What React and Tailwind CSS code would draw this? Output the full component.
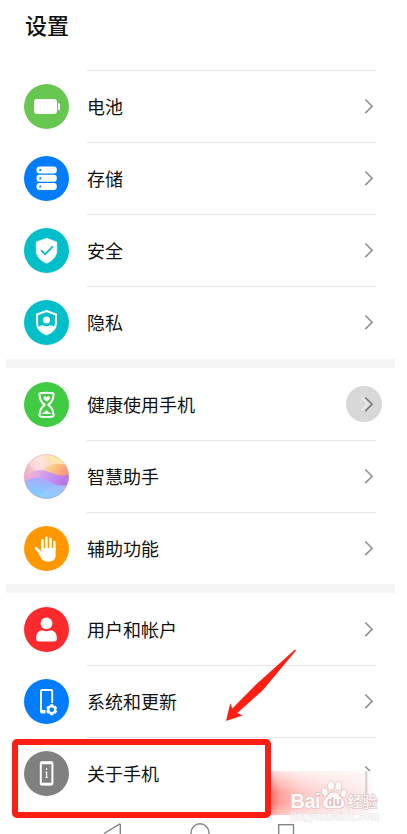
import { useId } from 'react'

const font = '"Noto Sans CJK SC", "Noto Sans", sans-serif'

function BatteryIcon() {
  return (
    <g fill="#fff">
      <rect x="10" y="15" width="23" height="15" rx="3" />
      <rect x="34" y="19.3" width="2" height="7" rx="0.7" />
    </g>
  )
}

function StorageIcon() {
  return (
    <g>
      {[10.6, 18.8, 27].map(y => (
        <g key={y}>
          <rect x="12.5" y={y} width="20.3" height="7" rx="3" fill="#fff" />
          <circle cx="16.3" cy={y + 3.5} r="1.1" fill="#007dff" />
        </g>
      ))}
    </g>
  )
}

function SecurityIcon() {
  return (
    <g>
      <path d="M22.5 10.2 L32.8 14 V22.5 C32.8 28.5 28.5 32.8 22.5 35.2 C16.5 32.8 12.2 28.5 12.2 22.5 V14 Z" fill="#fff" stroke="#fff" strokeWidth="0.6" strokeLinejoin="round" />
      <path d="M17 22.2 L21.2 26.2 L28.8 18.3" fill="none" stroke="#00bfc9" strokeWidth="1.7" />
    </g>
  )
}

function PrivacyIcon() {
  return (
    <g>
      <path d="M22.5 11 L32 14.6 V22.5 C32 28.4 28 32.2 22.5 34.3 C17 32.2 13 28.4 13 22.5 V14.6 Z" fill="none" stroke="#fff" strokeWidth="2.1" strokeLinejoin="round" />
      <circle cx="22.5" cy="20" r="3.5" fill="#fff" />
      <path d="M14 28.3 C15 26 16.5 25.3 18.8 25.2 Q22.5 27.4 26.2 25.2 C28.5 25.3 30 26 31 28.3 C28.5 31.5 25 33 22.5 34 C20 33 16.5 31.5 14 28.3 Z" fill="#fff" />
    </g>
  )
}

function HourglassIcon() {
  return (
    <g>
      <path d="M16.3 11.3 Q22.5 10.2 28.7 11.3 Q30.2 11.8 29.5 13.3 Q29 19.5 24.3 22.9 Q29 26.5 29.5 32.5 Q30.2 34 28.7 34.5 Q22.5 35.6 16.3 34.5 Q14.8 34 15.5 32.5 Q16 26.5 20.7 22.9 Q16 19.5 15.5 13.3 Q14.8 11.8 16.3 11.3 Z" fill="none" stroke="#fff" strokeWidth="2" strokeLinejoin="round" />
      <path d="M22.7 19.6 C21.2 18.5 19.6 17.2 19.6 15.9 C19.6 14.1 21.8 13.8 22.7 15.4 C23.6 13.8 26 14.1 26 15.9 C26 17.2 24.2 18.5 22.7 19.6 Z" fill="#fff" />
      <path d="M17.2 32 Q20.5 30.7 22.5 28 Q24.5 30.7 27.8 32 Z" fill="#fff" />
    </g>
  )
}

function AssistantIcon() {
  const id = useId()
  return (
    <g>
      <defs>
        <clipPath id={id + 'c'}><circle cx="22.5" cy="22.5" r="22.3" /></clipPath>
        <linearGradient id={id + 't'} x1="0" y1="0.55" x2="0.85" y2="0.05">
          <stop offset="0" stopColor="#f3a9c4" />
          <stop offset="0.5" stopColor="#fbd8cf" />
          <stop offset="1" stopColor="#fff09c" />
        </linearGradient>
        <linearGradient id={id + 'o'} x1="0" y1="0" x2="1" y2="0.5">
          <stop offset="0" stopColor="#fbd3b4" stopOpacity="0.4" />
          <stop offset="0.5" stopColor="#fdc37c" />
          <stop offset="1" stopColor="#f48f84" />
        </linearGradient>
        <linearGradient id={id + 'p'} x1="0" y1="0" x2="1" y2="0.2">
          <stop offset="0" stopColor="#f0aecd" stopOpacity="0.5" />
          <stop offset="0.35" stopColor="#dda9e6" />
          <stop offset="0.65" stopColor="#c691f4" />
          <stop offset="1" stopColor="#b878e4" />
        </linearGradient>
        <linearGradient id={id + 'b'} x1="0.3" y1="1" x2="0.6" y2="0">
          <stop offset="0" stopColor="#74d4ff" />
          <stop offset="0.5" stopColor="#8fc0ff" />
          <stop offset="1" stopColor="#b5a4f8" />
        </linearGradient>
      </defs>
      <g clipPath={`url(#${id}c)`}>
        <rect width="45" height="45" fill={`url(#${id}t)`} />
        <path d="M5 9 Q8 17 14 17 Q21 16 22 8 L20 0 H4 Z" fill="#fff" opacity="0.28" />
        <path d="M19 17 C25 9 36 8 45 12 V27 H16 Z" fill={`url(#${id}o)`} />
        <path d="M0 24 C8 16 16 14.5 24 17.5 S37 23.5 45 20.5 V33 H0 Z" fill={`url(#${id}p)`} />
        <path d="M0 27.5 C9 22.5 17 22.5 24 27 S37 32.5 45 31 V45 H0 Z" fill={`url(#${id}b)`} />
        <path d="M13 45 C17 37 25 33 36 31.5 L45 31 V45 Z" fill="#a9c9fa" opacity="0.4" />
      </g>
      <circle cx="22.5" cy="22.5" r="22" fill="none" stroke="#cf9a9f" strokeWidth="0.8" opacity="0.5" />
    </g>
  )
}

function HandIcon() {
  return (
    <g fill="none" stroke="#fff" strokeLinecap="round" strokeLinejoin="round">
      <path d="M18.4 24 V14.4 M22.4 24 V11.7 M26.4 24 V12.8 M30.3 24 V16.1" strokeWidth="2.6" />
      <path d="M12.1 22.3 L18.4 29" strokeWidth="2.8" />
      <path d="M17.1 22 H31.6 V29 C31.6 33 29.5 35.4 25.5 35.4 H22.8 C19.5 35.4 18 33.8 16.2 30.5 L14.6 27.4 L17.1 26.8 Z" fill="#fff" stroke="none" />
    </g>
  )
}

function UserIcon() {
  return (
    <g fill="#fff">
      <circle cx="22.5" cy="16.4" r="5.9" />
      <path d="M12.2 31 C12.2 26.2 14.5 23.6 18.2 23.2 Q22.5 25.4 26.8 23.2 C30.5 23.6 32.8 26.2 32.8 31 V32.3 Q32.8 34.4 30.7 34.4 H14.3 Q12.2 34.4 12.2 32.3 Z" />
    </g>
  )
}

function UpdateIcon() {
  return (
    <g>
      <path d="M21.5 33.6 H18 Q17 33.6 17 32.6 V12 Q17 11 18 11 H27.2 Q28.2 11 28.2 12 V24" fill="none" stroke="#fff" strokeWidth="1.9" />
      <path d="M17 32.2 H21.5" stroke="#fff" strokeWidth="2.5" />
      <g transform="translate(27.7 30.7)">
        {[0, 60, 120, 180, 240, 300].map(a => (
          <rect key={a} x="-1.7" y="-5.5" width="3.4" height="3" rx="0.6" fill="#fff" transform={`rotate(${a})`} />
        ))}
        <circle r="3.5" fill="none" stroke="#fff" strokeWidth="2.2" />
      </g>
    </g>
  )
}

function AboutIcon() {
  return (
    <g>
      <rect x="16.8" y="11.2" width="11.6" height="22.4" rx="1" fill="none" stroke="#fff" strokeWidth="2" />
      <path d="M17 12 H28 M17 33 H28" stroke="#fff" strokeWidth="2.6" />
      <path d="M22.6 17.1 V19 M22.6 20.6 V27 M21.4 21.2 H22.6 M21.4 26.5 H23.8" stroke="#fff" strokeWidth="1.2" />
    </g>
  )
}

const groups = [
  [
    { label: '电池', color: '#68c750', Icon: BatteryIcon },
    { label: '存储', color: '#007dff', Icon: StorageIcon },
    { label: '安全', color: '#00bfc9', Icon: SecurityIcon },
    { label: '隐私', color: '#00bfc9', Icon: PrivacyIcon },
  ],
  [
    { label: '健康使用手机', color: '#41cb45', Icon: HourglassIcon, pressed: true },
    { label: '智慧助手', color: '#ffffff', Icon: AssistantIcon },
    { label: '辅助功能', color: '#ff9800', Icon: HandIcon },
  ],
  [
    { label: '用户和帐户', color: '#fa2a2d', Icon: UserIcon },
    { label: '系统和更新', color: '#007dff', Icon: UpdateIcon },
    { label: '关于手机', color: '#808080', Icon: AboutIcon },
  ],
]

function Chevron({ pressed }) {
  return (
    <svg width="36" height="36" viewBox="0 0 36 36" className="-mr-1.5 mb-px shrink-0">
      {pressed && <circle cx="18" cy="18" r="18" fill="#d8d8d8" />}
      {pressed && <path d="M15.3 11.5 L21.8 18 L15.3 24.5" fill="none" stroke="#eeeeee" strokeWidth="1.5" />}
      <path d="M19.3 11.5 L26.1 18.3 L19.3 25.1" fill="none" stroke={pressed ? '#747474' : '#8c8c8c'} strokeWidth="1.5" />
    </svg>
  )
}

function Row({ label, color, Icon, pressed, divider }) {
  return (
    <div className="flex h-18 items-center pl-6 pr-[31px]">
      <svg width="45" height="45" viewBox="0 0 45 45" className="mt-px shrink-0">
        <circle cx="22.5" cy="22.5" r="22.5" fill={color} />
        <Icon />
      </svg>
      <div className={`ml-[18px] flex h-full flex-1 items-center justify-between border-t ${divider ? 'border-[#e3e3e3]' : 'border-transparent'}`}>
        <span className="mb-0.5 text-[18px] leading-6 text-[#111]">{label}</span>
        <Chevron pressed={pressed} />
      </div>
    </div>
  )
}

function NavBar() {
  return (
    <svg width="407" height="12" viewBox="0 0 407 12" className="mt-[14px]" fill="none" stroke="#858585" strokeWidth="1.4">
      <path d="M104 10.5 L119.5 1.1 Q120.3 0.8 120.3 2 V16" />
      <circle cx="200" cy="9.8" r="9" />
      <rect x="278.7" y="1.7" width="14.8" height="15" />
    </svg>
  )
}

function Watermark() {
  return (
    <svg width="115" height="64" viewBox="0 0 115 64" className="absolute left-[269px] top-[766px]">
      <defs>
        <linearGradient id="smear" x1="0" x2="1">
          <stop offset="0" stopColor="#ff5b52" />
          <stop offset="0.1" stopColor="#ff9a94" />
          <stop offset="0.28" stopColor="#ffc4c0" />
          <stop offset="0.55" stopColor="#fcd9d7" />
          <stop offset="0.88" stopColor="#fbe9e9" />
          <stop offset="1" stopColor="#ffffff" />
        </linearGradient>
        <linearGradient id="fade" x1="0" y1="0" x2="0" y2="1">
          <stop offset="0" stopColor="#fff" stopOpacity="0.75" />
          <stop offset="0.5" stopColor="#fff" stopOpacity="0.05" />
          <stop offset="0.75" stopColor="#fff" stopOpacity="0.05" />
          <stop offset="1" stopColor="#fff" stopOpacity="0.45" />
        </linearGradient>
      </defs>
      <rect x="0" y="5" width="106" height="44" fill="url(#smear)" />
      <rect x="0" y="5" width="106" height="44" fill="url(#fade)" />
      <rect x="96.3" y="5" width="2" height="26" fill="#b9a9a9" opacity="0.55" />
      <g fill="#fffafa" stroke="#d9bebe" strokeWidth="1.2" paintOrder="stroke">
        <text x="21.5" y="41.5" fontFamily="Liberation Sans, Arial, sans-serif" fontWeight="700" fontSize="20" textLength="30">Bai</text>
        <ellipse cx="55.8" cy="26" rx="2.8" ry="3.8" transform="rotate(-15 55.8 26)" />
        <ellipse cx="62" cy="19.5" rx="3" ry="4.3" />
        <ellipse cx="69.4" cy="19.8" rx="3" ry="4.3" transform="rotate(8 69.4 19.8)" />
        <ellipse cx="74.6" cy="27.5" rx="2.7" ry="3.8" transform="rotate(15 74.6 27.5)" />
        <path d="M64.8 26.2 C69 26.2 70 30 73.2 33 C77.4 37 75 42.5 70 42 H59.5 C54.5 42.5 52 37 56.2 33 C59.5 30 60.5 26.2 64.8 26.2 Z" />
        <text x="78.5" y="40.5" fontFamily={font} fontWeight="500" fontSize="15">经验</text>
      </g>
      <text x="57.8" y="40" fontFamily="Liberation Sans, Arial, sans-serif" fontWeight="700" fontSize="12" fill="#dcbfbf">du</text>
      <text x="22" y="54" fontFamily="Liberation Sans, Arial, sans-serif" fontSize="10" fill="#fff" stroke="#e6e2e2" strokeWidth="1" paintOrder="stroke" textLength="88">jingyanbaidu.com</text>
    </svg>
  )
}

export default function App() {
  return (
    <div className="relative h-[834px] w-[407px] overflow-hidden bg-white" style={{ fontFamily: font }}>
      <h1 className="h-[70px] pl-[25px] pt-2 text-[22px] font-medium leading-8 text-[#111]">设置</h1>
      {groups.map((rows, g) => (
        <div key={g}>
          {g > 0 && <div className="ml-1.5 mr-3 h-[9px] bg-[#f5f5f5]" />}
          {rows.map((row, i) => (
            <Row key={row.label} {...row} divider={g === 0 || i > 0} />
          ))}
          {g === 0 && <div className="h-px" />}
        </div>
      ))}
      <NavBar />

      <Watermark />

      {/* highlight box and arrow */}
      <div className="absolute left-3 top-[739px] h-[79px] w-[259px] rounded-[5px] border-6 border-[#ff1e12]" />
      <svg width="80" height="80" viewBox="0 0 80 80" className="absolute left-[220px] top-[645px]">
        <path d="M75 4.5 L76 5.6 L43 45 L17.3 68 L22.5 70.5 L6 76 L10.3 58.3 L12.3 63.5 L36 39.5 Z" fill="#ff1e12" />
      </svg>
    </div>
  )
}
